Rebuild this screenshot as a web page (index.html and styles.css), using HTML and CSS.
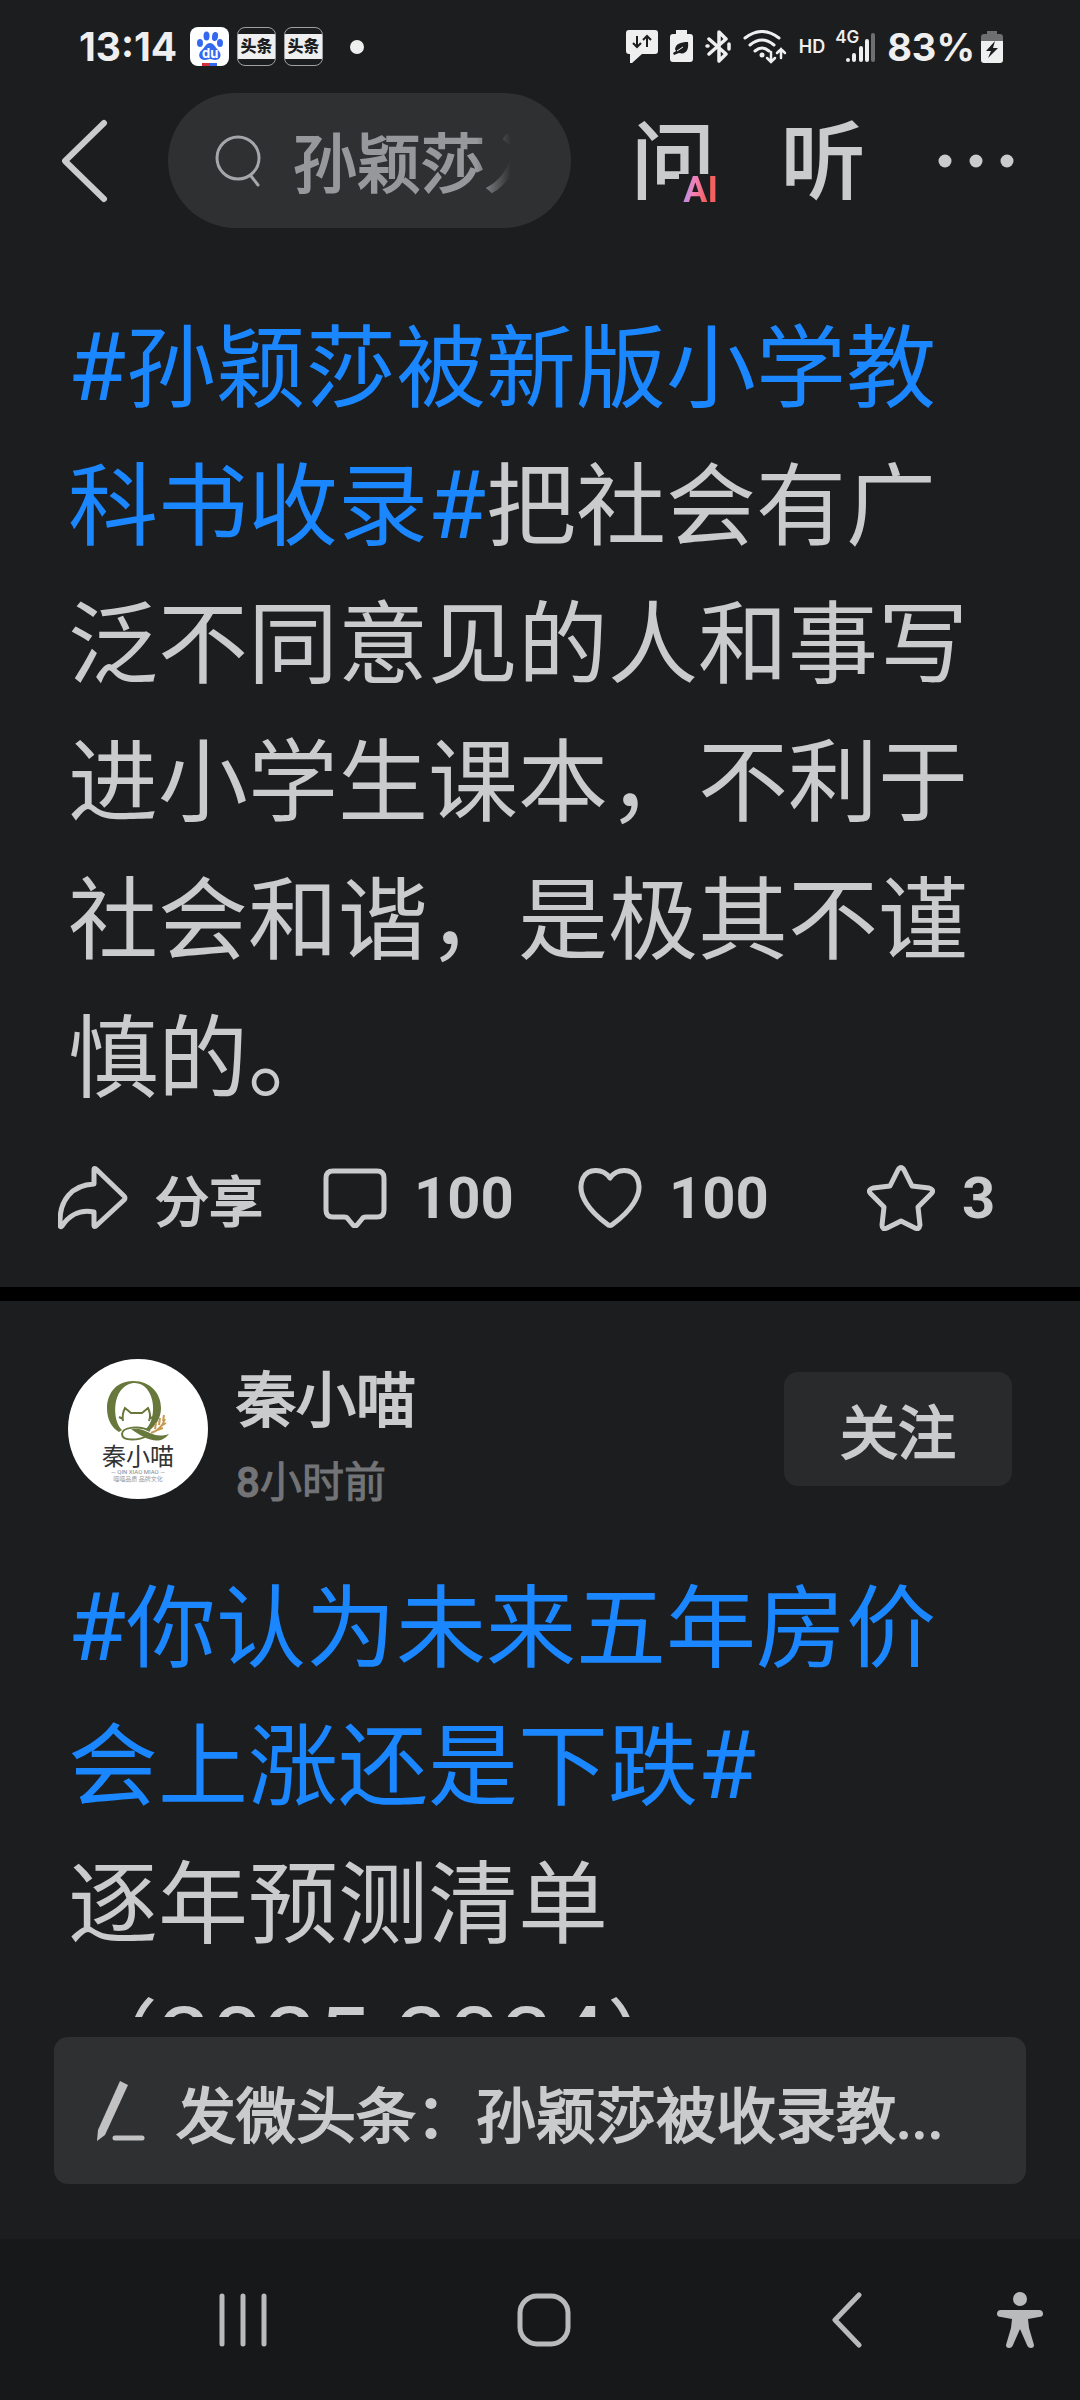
FILE: index.html
```html
<!DOCTYPE html>
<html lang="zh-CN">
<head>
<meta charset="utf-8">
<meta name="viewport" content="width=device-width, initial-scale=1">
<title>今日头条</title>
<link rel="stylesheet" href="styles.css">
</head>
<body>
<div class="status">
  <div class="status-side">
    <span class="clock">13:14</span>
    <span class="app-icons">
      <span class="app-baidu">
        <svg width="39" height="39" viewBox="0 0 39 39" aria-hidden="true">
          <g fill="#3468ee"><ellipse cx="16.500" cy="9" rx="3" ry="4.500"/><ellipse cx="25" cy="9.500" rx="3" ry="4.500" transform="rotate(10 25 9.500)"/><ellipse cx="10" cy="16" rx="3" ry="4"/><ellipse cx="30" cy="16" rx="3" ry="4"/>
          <path d="M20 16c4 0 5 4 8 7 5 5 2 10-3 10-2 0-3-1-5-1s-3 1-5 1c-6 0-8-6-3-10 3-3 4-7 8-7z"/></g>
          <rect x="12" y="36" width="8" height="3" fill="#d02f3c"/><rect x="20" y="36" width="7" height="3" fill="#3468ee"/>
        </svg>
        <span class="du">du</span>
      </span>
      <span class="app-toutiao"><span>头条</span></span>
      <span class="app-toutiao"><span>头条</span></span>
    </span>
    <span class="dot"></span>
  </div>
  <div class="status-side status-right">
    <svg width="32" height="33" viewBox="0 0 32 33" aria-hidden="true"><path d="M3 0h26q3 0 3 3v18q0 3-3 3H16l-10 9H4V24H3q-3 0-3-3V3q0-3 3-3z" fill="#efefef"/><path d="M11 6v11M7 13l4 4 4-4M21 17V6M17 10l4-4 4 4" fill="none" stroke="#1c1d1f" stroke-width="2"/></svg>
    <svg width="23" height="33" viewBox="0 0 23 33" aria-hidden="true"><path d="M6 0h11v4h3q3 0 3 3v22q0 3-3 3H3q-3 0-3-3V7q0-3 3-3h3z" fill="#efefef"/><path d="M5 19c1-5 5-7 13-7 1 8-2 13-9 11l-5 2-1-2 3-2z" fill="#1c1d1f"/><path d="M7 21l6-4" stroke="#efefef" stroke-width="1"/></svg>
    <svg width="26" height="33" viewBox="0 0 26 33" aria-hidden="true"><g fill="none" stroke="#efefef" stroke-width="3.500" stroke-linejoin="round" stroke-linecap="round"><path d="M4 9l17 15-7 7V2l7 7L4 24"/><path d="M2 16h1M24 14v5"/></g></svg>
    <svg width="44" height="34" viewBox="0 0 44 34" aria-hidden="true"><g fill="none" stroke="#efefef" stroke-width="3" stroke-linecap="round"><path d="M2 8q17-13 34 0M7 15q12-10 24 0M12 21q7-6 14 0"/><path d="M28 22v9M24 28l4 4 4-4M38 28v-9M34 23l4-4 4 4" stroke-width="2.500"/></g><circle cx="19" cy="25" r="2.500" fill="#efefef"/></svg>
    <span class="hd">HD</span>
    <span class="cell">
      <svg width="38" height="33" viewBox="0 0 38 33" aria-hidden="true"><g stroke="#efefef" stroke-width="4" stroke-linecap="round"><path d="M11 30v0M17 25v5M24 18v12M30 11v19"/><path d="M36 5v25" stroke="#6e6f70"/></g></svg>
      <span class="cell-label">4G</span>
    </span>
    <span class="percent">83%</span>
    <svg width="22" height="32" viewBox="0 0 22 32" aria-hidden="true"><path d="M6 0h10v3h3q3 0 3 3v4H0V6q0-3 3-3h3z" fill="#6e6f70"/><path d="M0 10h22v19q0 3-3 3H3q-3 0-3-3z" fill="#efefef"/><path d="M14 10L5 20h5l-3 7 10-10h-5z" fill="#1c1d1f"/></svg>
  </div>
</div>

<header class="topbar">
  <button class="icon-btn" aria-label="返回"><svg width="46" height="84" viewBox="0 0 46 84" aria-hidden="true"><path d="M42 4L3 42l39 38" fill="none" stroke="#cacbcd" stroke-width="6" stroke-linecap="round" stroke-linejoin="round"/></svg></button>
  <button class="search" aria-label="搜索">
    <svg width="46" height="52" viewBox="0 0 46 52" aria-hidden="true"><g fill="none" stroke="#a5a6a9" stroke-width="3" stroke-linecap="round"><circle cx="23" cy="23" r="21"/><path d="M36 41l7 9"/></g></svg>
    <span class="search-text">孙颖莎入选</span>
  </button>
  <button class="glyph-btn">问<span class="ai">AI</span></button>
  <button class="glyph-btn">听</button>
  <button class="icon-btn more" aria-label="更多"><svg width="76" height="14" viewBox="0 0 76 14" aria-hidden="true"><g fill="#cacbcd"><circle cx="7" cy="7" r="6.500"/><circle cx="38" cy="7" r="6.500"/><circle cx="69" cy="7" r="6.500"/></g></svg></button>
</header>

<main class="feed">
  <article class="post">
    <p class="text"><a href="#"><span class="latin">#</span>孙颖莎被新版小学教科书收录<span class="latin">#</span></a>把社会有广泛不同意见的人和事写进小学生课本，不利于社会和谐，是极其不谨慎的。</p>
    <div class="actions">
      <button class="action"><svg width="70" height="64" viewBox="0 0 70 64" aria-hidden="true"><path d="M36 4q0-3 3 0l27 26q2 2 0 4L39 59q-3 3-3 0V46C20 43 11 50 4 60q-2 2-2-2C1 34 14 19 36 18z" fill="none" stroke="#cacbcd" stroke-width="5" stroke-linejoin="round"/></svg><span class="share">分享</span></button>
      <button class="action"><svg width="64" height="60" viewBox="0 0 64 60" aria-hidden="true"><path d="M10 3h44q7 0 7 7v32q0 7-7 7H43q-3 0-4 2l-5 6q-2 2-4 0l-5-6q-1-2-4-2H10q-7 0-7-7V10q0-7 7-7z" fill="none" stroke="#cacbcd" stroke-width="5" stroke-linejoin="round"/></svg><span>100</span></button>
      <button class="action"><svg width="64" height="60" viewBox="0 0 64 60" aria-hidden="true"><path d="M32 10C25 0 10 0 5 10c-8 17 9 35 24 46q3 3 6 0C50 45 67 27 59 10 54 0 39 0 32 10z" fill="none" stroke="#cacbcd" stroke-width="5" stroke-linejoin="round"/></svg><span>100</span></button>
      <button class="action"><svg width="68" height="66" viewBox="0 0 68 66" aria-hidden="true"><path d="M31 5q3-5 6 0l8 16 17 2q6 2 2 6L51 42l2 18q-1 5-5 3L34 56 20 63q-5 2-5-3l2-18L4 29q-4-4 2-6l17-2z" fill="none" stroke="#cacbcd" stroke-width="5" stroke-linejoin="round"/></svg><span>3</span></button>
    </div>
  </article>

  <article class="post">
    <div class="author">
      <div class="avatar">
        <svg width="70" height="66" viewBox="0 0 70 66" aria-hidden="true"><path fill-rule="evenodd" d="M30 2C12 2 4 16 4 29c0 12 5 20 12 24l3-2C9 42 8 8 30 4c21-2 26 33 13 46l4 1c6-5 11-12 11-22C58 15 48 2 30 2z" fill="#68783c"/><path d="M47 52c-10-6-28-4-28 3 0 8 18 6 25 2" fill="none" stroke="#68783c" stroke-width="2"/><path d="M28 50c18-2 20 11 38 5-10 13-25 4-38-5z" fill="#68783c"/><path d="M20 42c-1-5 0-9 2-13l6 5h11l6-5c2 4 3 8 1 13M16 38l4 2M50 38l-4 2" fill="none" stroke="#68783c" stroke-width="2"/><path d="M48 54q10-3 14-14M52 50l1-6M56 46l1-7M60 42l1-6M54 51l6-2M58 47l5-3" fill="none" stroke="#c79a4e" stroke-width="2"/></svg>
        <span class="brand">秦小喵</span>
        <span class="brand-latin">— QIN XIAO MIAO —</span>
        <span class="brand-tag">喵喵品质 品牌文化</span>
      </div>
      <div class="who"><span class="name">秦小喵</span><span class="time"><b>8</b>小时前</span></div>
      <button class="follow">关注</button>
    </div>
    <p class="text"><a href="#"><span class="latin">#</span>你认为未来五年房价会上涨还是下跌<span class="latin">#</span></a><br>逐年预测清单<br>（<span class="latin">2025-2034</span>）</p>
  </article>
</main>

<div class="composer-wrap">
  <button class="composer">
    <svg width="50" height="62" viewBox="0 0 50 62" aria-hidden="true"><path d="M24 1l8 4L9 55l-8 6 1-11z" fill="#c2c2c2"/><path d="M19 58h27" stroke="#c2c2c2" stroke-width="5" stroke-linecap="round"/></svg>
    <span>发微头条：孙颖莎被收录教...</span>
  </button>
</div>

<nav class="nav" aria-label="系统导航">
  <button class="icon-btn" aria-label="最近任务"><svg width="50" height="56" viewBox="0 0 50 56" aria-hidden="true"><path d="M4 4v48M25 4v48M46 4v48" stroke="#b9babc" stroke-width="5" stroke-linecap="round"/></svg></button>
  <button class="icon-btn" aria-label="主屏幕"><svg width="54" height="56" viewBox="0 0 54 56" aria-hidden="true"><rect x="3" y="4" width="48" height="48" rx="17" fill="none" stroke="#b9babc" stroke-width="5"/></svg></button>
  <button class="icon-btn" aria-label="返回"><svg width="32" height="56" viewBox="0 0 32 56" aria-hidden="true"><path d="M28 3L4 28l24 25" fill="none" stroke="#b9babc" stroke-width="5" stroke-linecap="round" stroke-linejoin="round"/></svg></button>
  <button class="icon-btn" aria-label="无障碍"><svg width="46" height="58" viewBox="0 0 46 58" aria-hidden="true"><g fill="#b9babc"><circle cx="23" cy="8" r="7"/><path d="M4 19h38q4 0 4 4 0 3-4 3l-11 2 1 9 5 17q0 3-3 3t-4-3l-7-16-7 16q-1 3-4 3t-3-3l5-17 1-9-11-2q-4 0-4-3 0-4 4-4z"/></g></svg></button>
</nav>
</body>
</html>
```
FILE: styles.css
```css
* { box-sizing: border-box; }

body {
  margin: 0;
  height: 100vh;
  display: flex;
  flex-direction: column;
  background: #1c1d1f;
  color: #cacbcd;
  font-family: Roboto, "Noto Sans CJK SC", sans-serif;
}

button {
  margin: 0;
  padding: 0;
  border: 0;
  background: none;
  color: inherit;
  font-family: inherit;
}

svg { display: block; flex: none; }
a { color: #1a86ff; text-decoration: none; }

/* status bar */
.status {
  height: 93px;
  flex: none;
  padding: 0 77px 0 79px;
  display: flex;
  justify-content: space-between;
  align-items: center;
  color: #efefef;
  font-family: Inter, "Noto Sans CJK SC", sans-serif;
}
.status-side { display: flex; align-items: center; }
.status-right { gap: 12px; }
.clock { width: 111px; font-size: 39px; font-weight: 700; }
.app-icons { display: flex; gap: 8px; margin-right: 27px; }
.app-baidu {
  position: relative;
  width: 39px;
  height: 39px;
  border-radius: 8px;
  background: #fff;
  overflow: hidden;
}
.du {
  position: absolute;
  top: 20px;
  left: 12px;
  color: #fff;
  font-size: 13px;
  line-height: 13px;
  font-weight: 700;
}
.app-toutiao {
  width: 39px;
  height: 39px;
  border: 1px solid #a0a0a0;
  border-radius: 8px;
  display: flex;
  align-items: center;
  overflow: hidden;
}
.app-toutiao span {
  width: 100%;
  background: #efefef;
  color: #1c1d1f;
  font-size: 16px;
  line-height: 25px;
  font-weight: 900;
  text-align: center;
}
.dot { width: 14px; height: 14px; border-radius: 50%; background: #efefef; }
.hd { font-size: 18px; font-weight: 600; }
.cell { position: relative; }
.cell-label { position: absolute; top: -1px; left: -2px; font-size: 17px; line-height: 16px; font-weight: 600; }
.percent { font-size: 38px; font-weight: 700; }
.status-right .percent { margin-right: -6px; }

/* top bar */
.topbar {
  height: 135px;
  flex: none;
  padding: 0 66px 0 62px;
  display: flex;
  align-items: center;
}
.icon-btn { display: flex; align-items: center; justify-content: center; }
.search {
  flex: 1;
  height: 135px;
  margin: 0 60px;
  padding: 0 60px 0 47px;
  display: flex;
  align-items: center;
  gap: 32px;
  border-radius: 68px;
  background: #2f3031;
  overflow: hidden;
}
.search-text {
  flex: 1;
  padding-top: 10px;
  overflow: hidden;
  white-space: nowrap;
  text-align: left;
  font-size: 64px;
  line-height: 90px;
  color: #97989c;
  -webkit-text-stroke: 2px #97989c;
  mask-image: linear-gradient(to right, #000 84%, transparent);
}
.glyph-btn {
  position: relative;
  width: 84px;
  margin-right: 66px;
  padding-top: 6px;
  font-size: 84px;
  line-height: 100px;
  -webkit-text-stroke: 2px #cacbcd;
}
.glyph-btn + .glyph-btn { margin-right: 73px; }
.ai {
  position: absolute;
  right: -3px;
  bottom: 8px;
  padding-left: 4px;
  background:
    linear-gradient(100deg, #8f9bff 10%, #f77fb4 40%, #f2605f 70%) text,
    linear-gradient(#1c1d1f, #1c1d1f) border-box;
  color: transparent;
  font-size: 36px;
  line-height: 32px;
  font-weight: 700;
  -webkit-text-stroke: 0;
}

/* feed */
.feed { flex: 1; min-height: 0; overflow: hidden; }
.post + .post { border-top: 14px solid #000; }
.text {
  margin: 0;
  padding: 0 68px;
  font-size: 90px;
  line-height: 138px;
}
.latin { font-size: 94px; line-height: 1; }
.post:first-child { padding-top: 73px; }

.actions {
  height: 158px;
  padding: 0 84px 20px 58px;
  display: grid;
  grid-template-columns: 265fr 255fr 289fr 129fr;
  align-items: center;
}
.action {
  display: flex;
  align-items: center;
  gap: 27px;
  font-size: 58px;
  line-height: 64px;
  font-weight: 700;
}
.action .share {
  padding-top: 12px;
  font-size: 54px;
  font-weight: 400;
  -webkit-text-stroke: 2px #cacbcd;
}

.author {
  height: 260px;
  padding: 58px 68px 0;
  display: flex;
  align-items: flex-start;
}
.avatar {
  width: 140px;
  height: 140px;
  padding-top: 20px;
  display: flex;
  flex-direction: column;
  align-items: center;
  border-radius: 50%;
  background: #fff;
  color: #333;
}
.brand { font-size: 24px; line-height: 24px; }
.brand-latin { font-size: 6px; line-height: 6px; color: #888; white-space: nowrap; }
.brand-tag { font-size: 6px; line-height: 7px; color: #999; white-space: nowrap; }
.who { flex: 1; padding: 3px 0 0 28px; display: flex; flex-direction: column; }
.name { font-size: 60px; line-height: 80px; -webkit-text-stroke: 2px #cacbcd; }
.time { font-size: 42px; line-height: 82px; color: #737477; -webkit-text-stroke: 1px #737477; }
.time b { font-weight: 500; }
.follow {
  width: 228px;
  height: 114px;
  margin-top: 13px;
  border-radius: 14px;
  background: #282a2b;
  font-size: 58px;
  -webkit-text-stroke: 2px #cacbcd;
}

/* composer and navigation */
.composer-wrap { flex: none; padding: 20px 54px 55px; }
.composer {
  width: 100%;
  height: 147px;
  padding: 0 42px;
  display: flex;
  align-items: center;
  gap: 30px;
  border-radius: 14px;
  background: #2f3031;
  font-size: 60px;
  white-space: nowrap;
  -webkit-text-stroke: 2px #cacbcd;
}
.composer span { padding-top: 2px; }
.nav {
  height: 161px;
  flex: none;
  padding: 0 37px 0 218px;
  display: grid;
  grid-template-columns: 299fr 314fr 166fr 46fr;
  justify-items: start;
  align-items: center;
  background: #17181a;
}
```
